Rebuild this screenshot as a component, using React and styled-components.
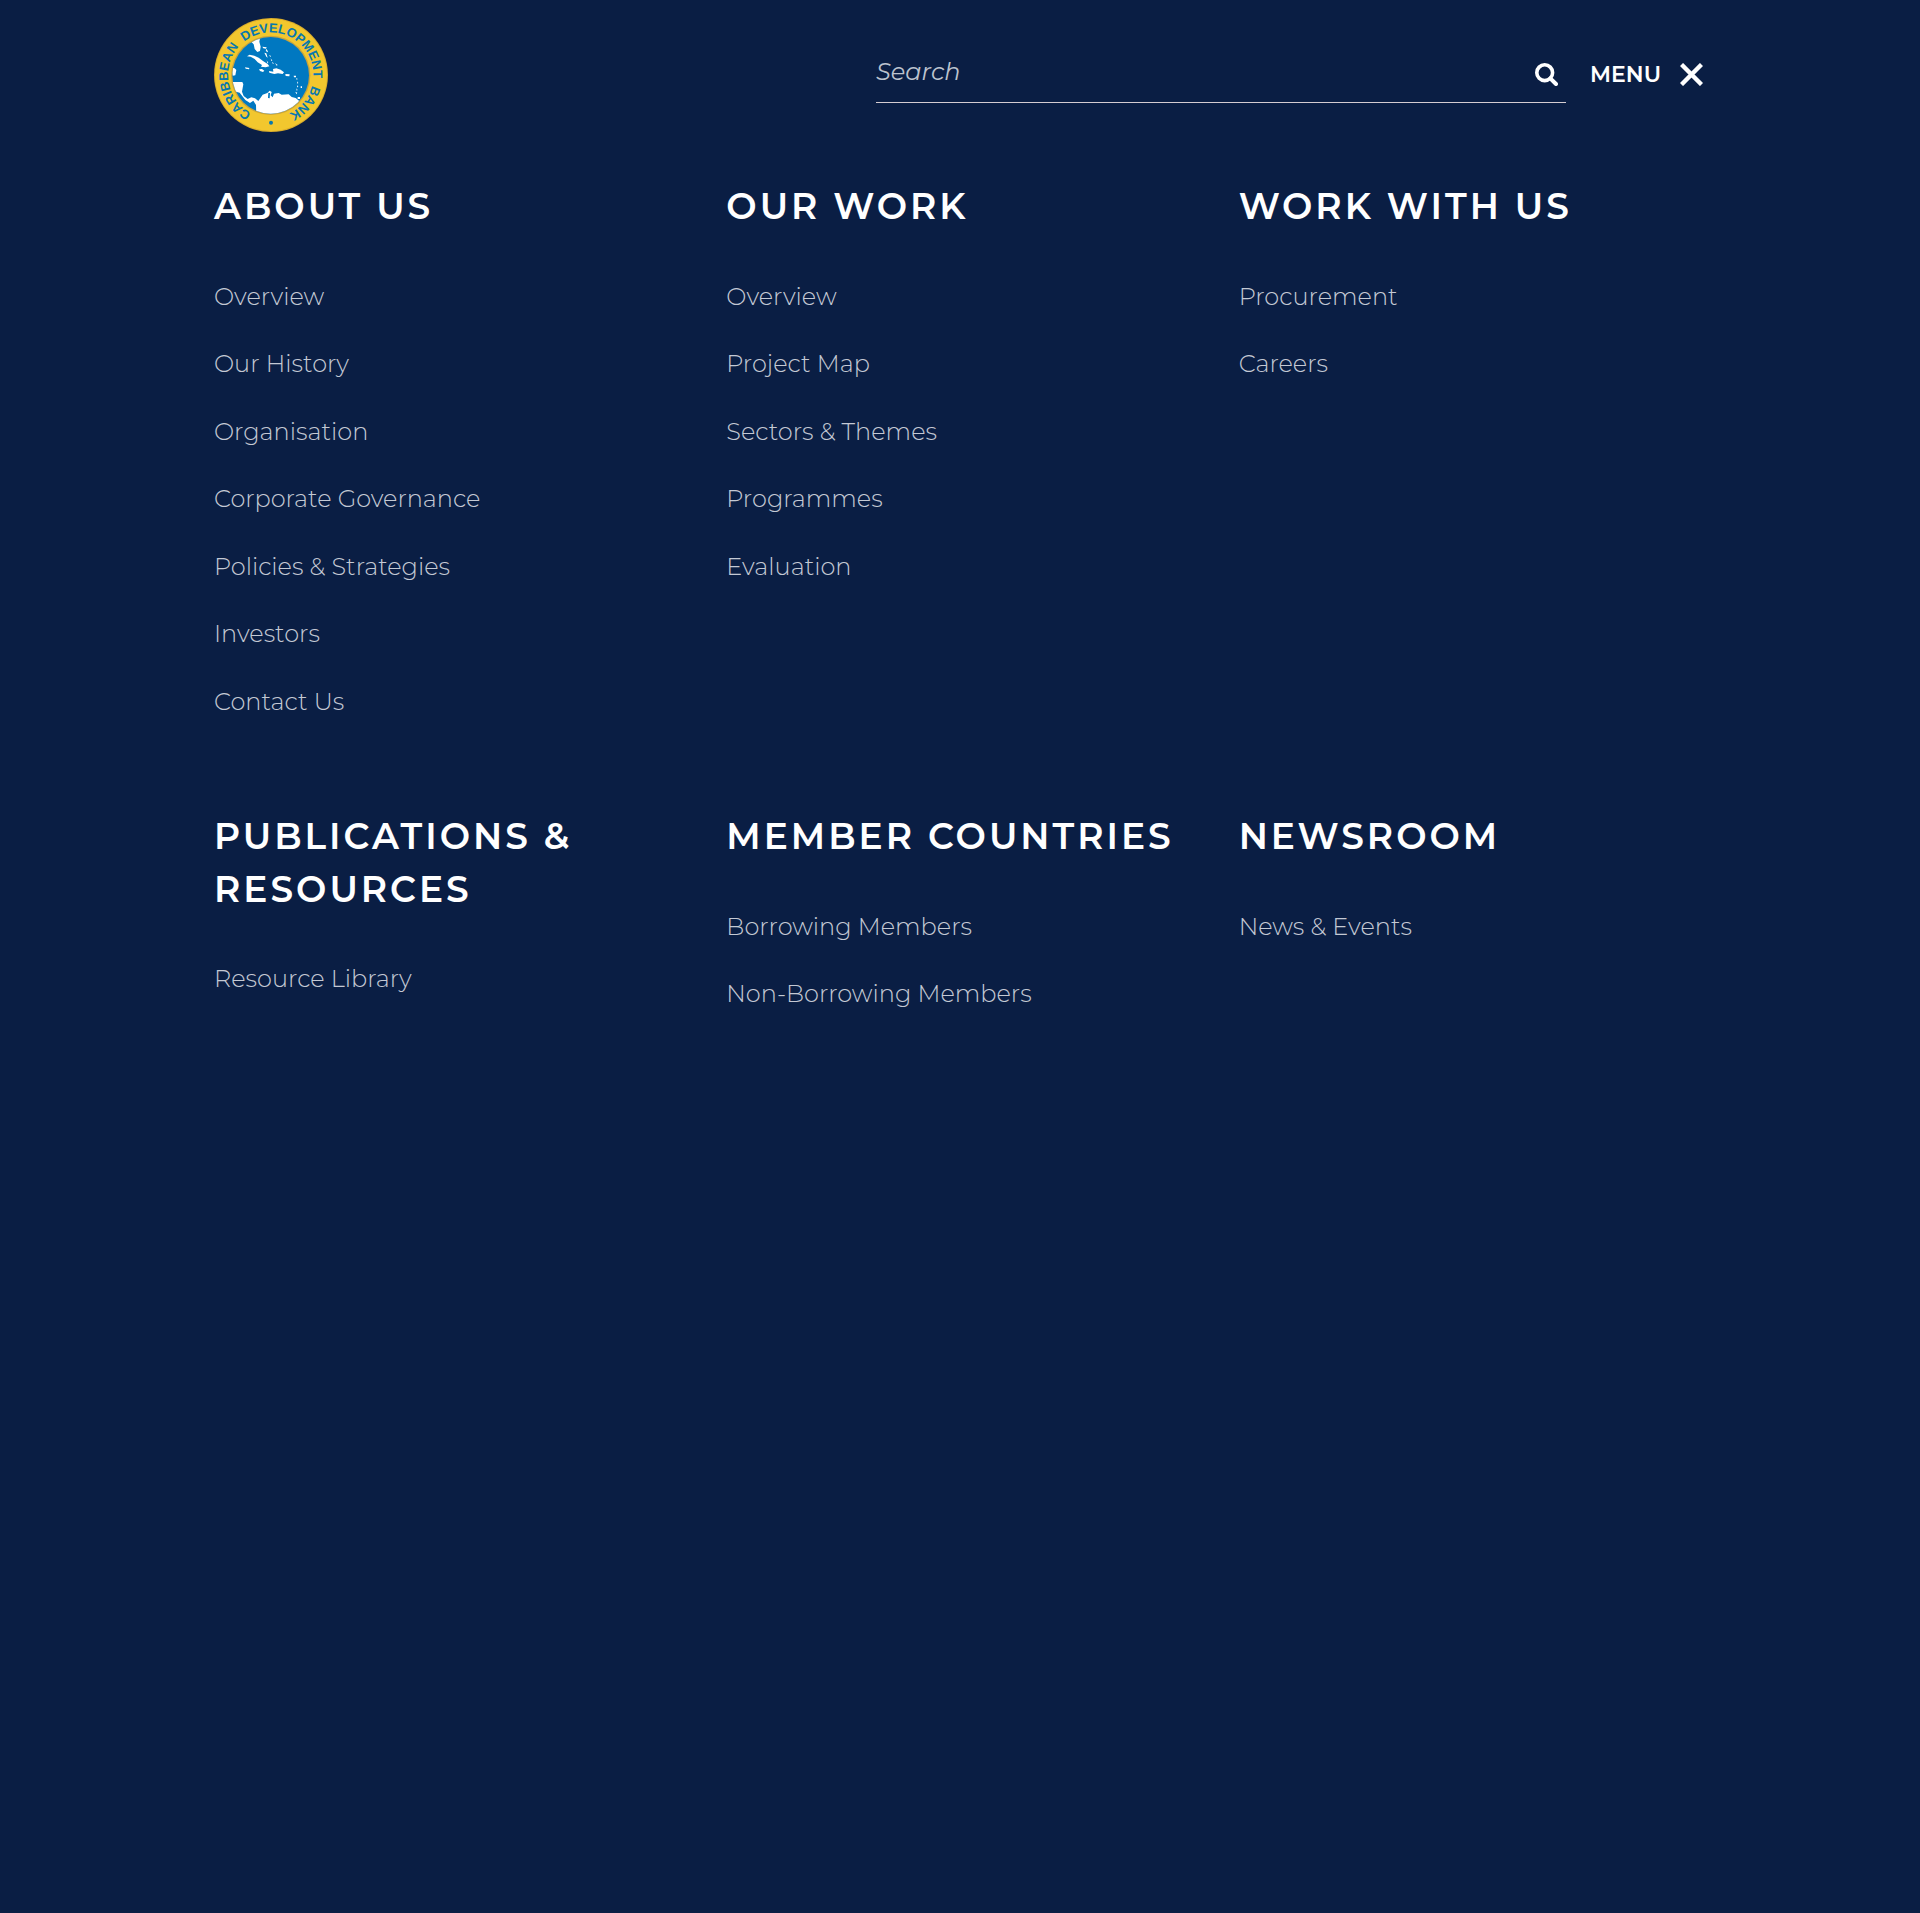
import React from "react";
import styled, { createGlobalStyle } from "styled-components";

const GlobalStyle = createGlobalStyle`
  *, *::before, *::after { box-sizing: border-box; }
  html { background: #0a1e44; }
  body {
    margin: 0;
    color: #fff;
    font-family: Montserrat, Inter, "Liberation Sans", sans-serif;
    font-size: 24px;
    font-weight: 300;
    line-height: 1.48;
  }
`;

const Page = styled.div`
  max-width: 1540px;
  min-height: 100vh;
  margin: 0 auto;
  padding: 0 24px;
`;

const Header = styled.header`
  display: flex;
  align-items: center;
  padding: 18px 3px 0 0;
`;

const LogoLink = styled.a`
  display: block;
  width: 114px;
  height: 114px;
  flex: none;
  svg { display: block; width: 100%; height: 100%; }
`;

const Tools = styled.div`
  flex: 1;
  display: flex;
  align-items: center;
  justify-content: flex-end;
  gap: 24px;
`;

const SearchForm = styled.form`
  display: flex;
  align-items: center;
  flex: 0 1 690px;
  height: 56px;
  border-bottom: 1px solid #d5cdd2;
`;

const SearchInput = styled.input`
  flex: 1;
  min-width: 0;
  height: 55px;
  padding: 0 0 6px;
  border: 0;
  outline: 0;
  background: transparent;
  color: #fff;
  font: inherit;
  font-style: italic;
  font-weight: 400;
  &::placeholder { color: #bcc3ce; opacity: 1; }
`;

const IconButton = styled.button`
  display: flex;
  align-items: center;
  gap: 19px;
  padding: ${(p) => (p.$inset ? "0 8px 0 0" : "0")};
  border: 0;
  background: transparent;
  color: #fff;
  font: inherit;
  font-size: 22px;
  font-weight: 600;
  text-transform: uppercase;
  cursor: pointer;
  svg { display: block; width: 23px; height: 23px; }
`;

const Menu = styled.nav`
  display: grid;
  grid-template-columns: repeat(3, minmax(0, 1fr));
  column-gap: 45px;
  row-gap: 91px;
  padding-top: 48px;
`;

const Heading = styled.h2`
  margin: 0 0 46px;
  font-size: 36px;
  font-weight: 600;
  line-height: 1.46;
  letter-spacing: 3px;
  text-transform: uppercase;
`;

const List = styled.ul`
  display: grid;
  gap: 32px;
  margin: 0;
  padding: 0;
  list-style: none;
`;

const MenuLink = styled.a`
  display: block;
  color: #c4c9d4;
  text-decoration: none;
  &:hover { color: #fff; }
`;

const sections = [
  ["About Us", ["Overview", "Our History", "Organisation", "Corporate Governance", "Policies & Strategies", "Investors", "Contact Us"]],
  ["Our Work", ["Overview", "Project Map", "Sectors & Themes", "Programmes", "Evaluation"]],
  ["Work With Us", ["Procurement", "Careers"]],
  ["Publications & Resources", ["Resource Library"]],
  ["Member Countries", ["Borrowing Members", "Non-Borrowing Members"]],
  ["Newsroom", ["News & Events"]],
];

function Logo() {
  return (
    <svg viewBox="43 39 342 342" role="img" aria-label="Caribbean Development Bank">
      <defs>
        <clipPath id="sea"><circle cx="213" cy="211" r="115" /></clipPath>
        <path id="ring" d="M213 338 A128 128 0 0 1 213 82 A128 128 0 0 1 213 338" />
      </defs>
      <circle cx="214" cy="210" r="171" fill="#d9ac2c" />
      <circle cx="214" cy="210" r="168" fill="#f2c72e" />
      <circle cx="213" cy="211" r="119" fill="#c9a43c" />
      <circle cx="213" cy="211" r="115" fill="#0078c1" />
      <g clipPath="url(#sea)" fill="#fff">
        <path d="M155 94 L182 94 L179 110 L183 125 L181 138 L173 141 L165 132 L162 118 L152 108Z" />
        <path d="M142 154 L150 149 L164 152 L177 158 L190 168 L204 177 L209 184 L198 187 L184 185 L187 180 L174 172 L165 162 L153 155Z" />
        <path d="M178 193 L187 192 L194 197 L190 201 L181 198Z M208 198 L221 200 L220 192 L230 190 L243 194 L253 202 L249 207 L235 205 L224 207 L209 203Z M257 207 L270 208 L269 214 L258 213Z" />
        <path d="M136 187 l13 2 l-1 4 l-10 -2Z M188 125 l13 2 l-2 4 l-8 -1Z M201 132 l4 8 l-3 2 l-4 -7Z M194 143 l6 2 l4 13 l-4 -3Z M208 150 l6 3 l-2 3Z M213 160 l5 7 l-3 1Z M217 170 l5 5 l-2 3Z M226 174 l8 6 l-3 2Z M201 166 l5 8 l-3 1Z" />
        <path d="M282 212 h7 v5 h-6Z M290 218 l4 4 l-3 3Z M292 229 l4 5 l-3 2Z M293 240 l3 6 l-4 1Z M290 250 l4 5 l-3 2Z M287 260 l6 3 l-3 5Z M303 244 h4 v5 h-4Z M294 276 h7 v6 h-7Z" />
        <path d="M94 188 L105 190 L110 195 L107 211 L99 212Z" />
        <path d="M90 231 L128 231 L131 238 L127 260 L132 273 L144 282 L155 277 L166 280 L176 288 L189 269 L203 264 L210 257 L216 261 L213 271 L219 277 L223 266 L237 264 L246 269 L267 268 L276 276 L288 279 L306 294 L300 340 L170 340 L169 300 L161 287 L151 294 L137 285 L120 263 L98 257Z" />
        <path d="M206 263 l5 1 l-1 16 l-5 -1Z" fill="#0078c1" />
      </g>
      <text fill="#0878ae" fontFamily="'Liberation Sans', Arial, sans-serif" fontSize="39" fontWeight="700">
        <textPath href="#ring" startOffset="60">{"CARIBBEAN\u00a0 DEVELOPMENT\u00a0 BANK"}</textPath>
      </text>
      <circle cx="214" cy="353" r="6" fill="#0878ae" />
    </svg>
  );
}

export default function App() {
  return (
    <>
      <GlobalStyle />
      <Page>
        <Header>
          <LogoLink href="#" aria-label="Caribbean Development Bank home"><Logo /></LogoLink>
          <Tools>
            <SearchForm role="search" onSubmit={(e) => e.preventDefault()}>
              <SearchInput type="text" placeholder="Search" aria-label="Search" />
              <IconButton type="submit" aria-label="Submit search" $inset>
                <svg viewBox="0 0 23 23" fill="none" stroke="currentColor" strokeWidth="3.6">
                  <circle cx="9.7" cy="9.7" r="7.9" />
                  <path d="M15.3 15.3 L21 21" strokeWidth="4" strokeLinecap="round" />
                </svg>
              </IconButton>
            </SearchForm>
            <IconButton type="button" aria-expanded="true">
              Menu
              <svg viewBox="0 0 23 23" stroke="currentColor" strokeWidth="4.4" aria-hidden="true">
                <path d="M1.5 1.5 L21.5 21.5 M21.5 1.5 L1.5 21.5" />
              </svg>
            </IconButton>
          </Tools>
        </Header>
        <Menu aria-label="Main">
          {sections.map(([title, links]) => (
            <section key={title}>
              <Heading>{title}</Heading>
              <List>
                {links.map((label) => (
                  <li key={label}><MenuLink href="#">{label}</MenuLink></li>
                ))}
              </List>
            </section>
          ))}
        </Menu>
      </Page>
    </>
  );
}
